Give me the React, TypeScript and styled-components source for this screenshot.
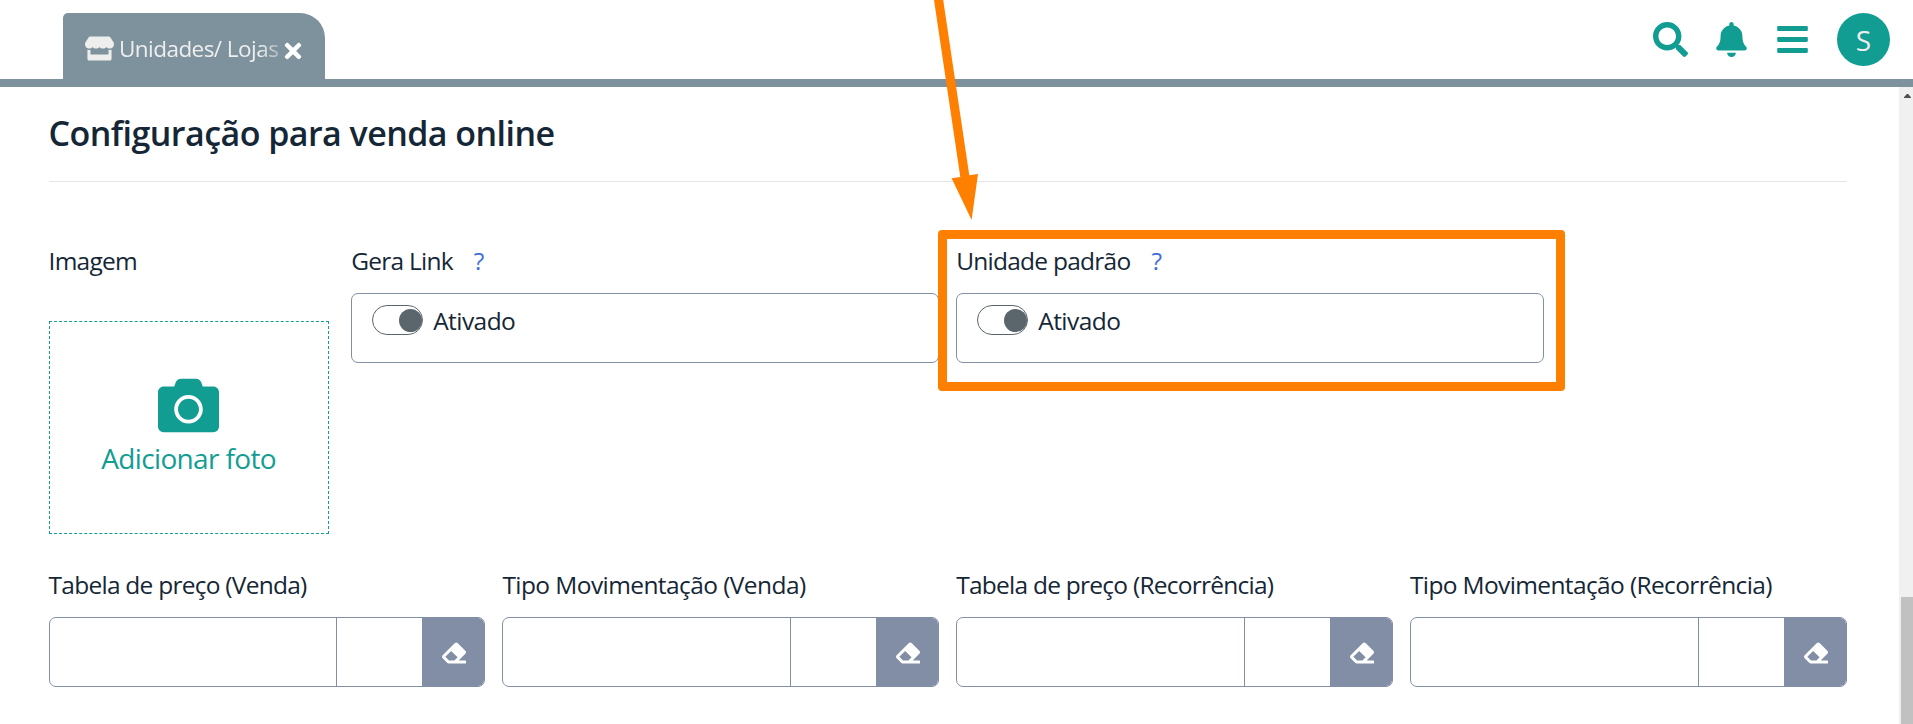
import React from "react";
import styled, { createGlobalStyle } from "styled-components";
import { FaStore, FaTimes, FaSearch, FaBell, FaBars, FaCamera, FaEraser } from "react-icons/fa";

const teal = "#129d93";
const slate = "#7d929c";
const line = "#828ea5";
const ink = "#152736";

const GlobalStyle = createGlobalStyle`
  * { box-sizing: border-box; }
  body {
    margin: 0;
    overflow: hidden;
    background: #fff;
    color: ${ink};
    font-family: "Segoe UI", "Open Sans", "Noto Sans", sans-serif;
  }
`;

const Page = styled.div`
  position: relative;
  display: flex;
  flex-direction: column;
  height: 724px;
  overflow: hidden;
`;

const Header = styled.header`
  display: flex;
  justify-content: space-between;
  height: 87px;
  padding: 13px 23px 0 63px;
  border-bottom: 8px solid ${slate};
`;

const Tab = styled.div`
  display: flex;
  align-items: center;
  width: 262px;
  height: 66px;
  padding: 4px 0 0 22px;
  border-radius: 5px 25px 0 0;
  background: ${slate};
  color: #eee;
  svg { flex: none; }
`;

const TabTitle = styled.span`
  width: 162px;
  margin: 0 0 0 5px;
  white-space: nowrap;
  font-size: 22.5px;
  letter-spacing: -0.55px;
  mask-image: linear-gradient(to right, #000 140px, rgba(0, 0, 0, 0.35) 162px);
`;

const CloseIcon = styled(FaTimes)`
  margin-top: 5px;
  color: #fff;
`;

const Actions = styled.nav`
  display: flex;
  height: 53px;
  color: ${teal};
  font-size: 35px;
  svg { margin-top: 9px; }
`;

const BellIcon = styled(FaBell)`
  margin-left: 26px;
`;

const MenuIcon = styled(FaBars)`
  margin-left: 26px;
`;

const Avatar = styled.div`
  width: 53px;
  height: 53px;
  margin-left: 27px;
  border-radius: 50%;
  background: ${teal};
  color: #eee;
  font-size: 28px;
  line-height: 55px;
  text-align: center;
`;

const Body = styled.div`
  display: flex;
  flex: 1;
  justify-content: space-between;
  min-height: 0;
`;

const Content = styled.main`
  width: 1798px;
  margin-left: 48.6px;
`;

const Title = styled.h1`
  height: 95px;
  margin: 0 0 63px;
  padding-top: 23px;
  border-bottom: 1px solid #e3e5e6;
  font-size: 34px;
  font-weight: 600;
  line-height: 46px;
  letter-spacing: -0.55px;
`;

const Grid = styled.div`
  display: grid;
  grid-template-columns: repeat(12, minmax(0, 1fr));
  column-gap: 17.2px;
`;

const Field = styled.div<{ $span: number }>`
  grid-column: span ${(p) => p.$span};
`;

const Label = styled.div<{ $track?: number }>`
  height: 32px;
  margin-bottom: 16px;
  font-size: 24.5px;
  line-height: 32px;
  white-space: nowrap;
  letter-spacing: ${(p) => p.$track ?? -0.75}px;
`;

const Help = styled.span`
  margin-left: 21px;
  color: #3f6fd9;
`;

const Upload = styled.div`
  display: flex;
  flex-direction: column;
  align-items: center;
  width: 280px;
  height: 213px;
  margin-top: 44px;
  margin-bottom: 35px;
  padding-top: 53px;
  border: 1px dashed ${teal};
  color: ${teal};
  font-size: 28px;
  line-height: 38px;
  letter-spacing: -0.65px;
`;

const UploadText = styled.span`
  margin-top: 3px;
`;

const SwitchBox = styled.div`
  display: flex;
  height: 70px;
  padding: 11px 20px;
  border: 1px solid ${line};
  border-radius: 7px;
  font-size: 24.5px;
  line-height: 31px;
  letter-spacing: -0.55px;
`;

const Toggle = styled.div`
  display: flex;
  justify-content: flex-end;
  width: 51px;
  height: 30px;
  margin-right: 10px;
  padding: 2.5px 0.5px;
  border: 1px solid #5b666c;
  border-radius: 15px;
  &::after {
    content: "";
    width: 23px;
    height: 23px;
    border-radius: 50%;
    background: #5b666c;
  }
`;

const Lookup = styled.div`
  display: flex;
  height: 70px;
  overflow: hidden;
  border: 1px solid ${line};
  border-radius: 7px;
`;

const LookupText = styled.div`
  flex: 1;
  border-right: 1px solid ${line};
`;

const LookupCode = styled.div`
  width: 85px;
`;

const ClearButton = styled.div`
  display: flex;
  align-items: center;
  justify-content: center;
  width: 62px;
  padding: 1px 0 0 2px;
  background: ${line};
  color: #fff;
`;

const Scrollbar = styled.div`
  display: flex;
  flex-direction: column;
  justify-content: space-between;
  align-items: flex-end;
  width: 14px;
  background: #f0f0f0;
`;

const ScrollUp = styled.div`
  width: 7px;
  height: 4px;
  margin: 7px 2px 0 0;
  background: #505050;
  clip-path: polygon(40% 0, 60% 0, 100% 80%, 100% 100%, 0 100%, 0 80%);
`;

const Thumb = styled.div`
  width: 12px;
  height: 127px;
  background: #c1c1c1;
`;

const Highlight = styled.div`
  position: absolute;
  left: 938px;
  top: 230px;
  width: 627px;
  height: 161px;
  border: 9px solid #ff8000;
  border-radius: 4px;
`;

const Arrow = styled.svg`
  position: absolute;
  left: 930px;
  top: 0;
`;

const lookups = [
  { label: "Tabela de preço (Venda)", track: -0.75 },
  { label: "Tipo Movimentação (Venda)", track: -0.58 },
  { label: "Tabela de preço (Recorrência)", track: -0.75 },
  { label: "Tipo Movimentação (Recorrência)", track: -0.63 },
];

export default function App() {
  return (
    <Page>
      <GlobalStyle />
      <Header>
        <Tab>
          <FaStore size={29} />
          <TabTitle>Unidades/ Lojas</TabTitle>
          <CloseIcon size={24} />
        </Tab>
        <Actions>
          <FaSearch />
          <BellIcon />
          <MenuIcon />
          <Avatar>S</Avatar>
        </Actions>
      </Header>
      <Body>
        <Content>
          <Title>Configuração para venda online</Title>
          <Grid>
            <Field $span={2}>
              <Label>Imagem</Label>
              <Upload>
                <FaCamera size={61} />
                <UploadText>Adicionar foto</UploadText>
              </Upload>
            </Field>
            <Field $span={4}>
              <Label>Gera Link<Help>?</Help></Label>
              <SwitchBox><Toggle />Ativado</SwitchBox>
            </Field>
            <Field $span={4}>
              <Label>Unidade padrão<Help>?</Help></Label>
              <SwitchBox><Toggle />Ativado</SwitchBox>
            </Field>
          </Grid>
          <Grid>
            {lookups.map((f) => (
              <Field $span={3} key={f.label}>
                <Label $track={f.track}>{f.label}</Label>
                <Lookup>
                  <LookupText />
                  <LookupCode />
                  <ClearButton><FaEraser size={24} /></ClearButton>
                </Lookup>
              </Field>
            ))}
          </Grid>
        </Content>
        <Scrollbar>
          <ScrollUp />
          <Thumb />
        </Scrollbar>
      </Body>
      <Highlight />
      <Arrow width="60" height="224" viewBox="0 0 60 224">
        <path d="M4 0H13.2L39.3 175.3L48 174L41.6 220L21.6 178.3L30.3 177Z" fill="#ff8000" />
      </Arrow>
    </Page>
  );
}
